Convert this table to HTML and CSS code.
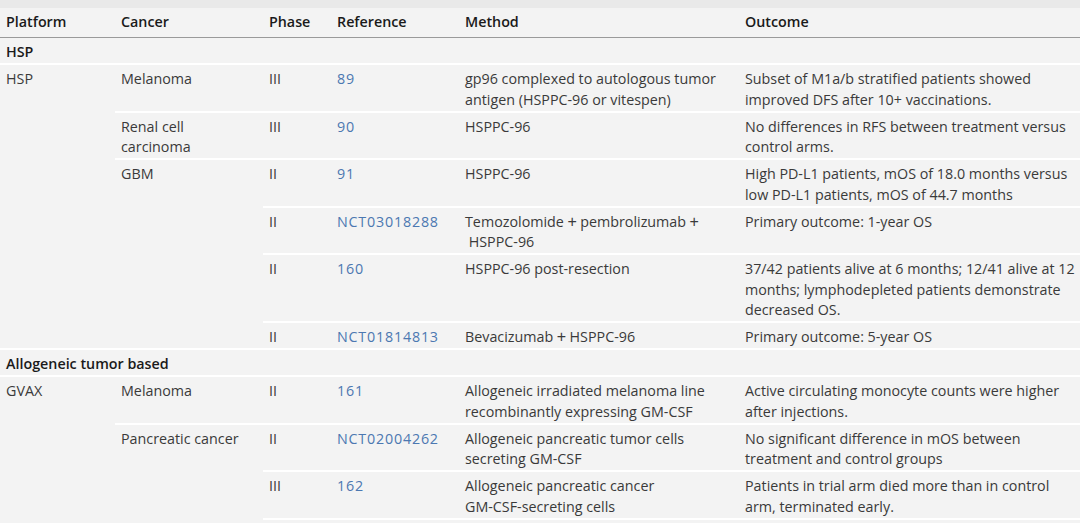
FILE: index.html
```html
<!DOCTYPE html>
<html>
<head>
<meta charset="utf-8">
<link rel="stylesheet" href="styles.css">
</head>
<body>
<div class="topbar"></div>
<table class="trials">
  <colgroup>
    <col class="c-platform"><col class="c-cancer"><col class="c-phase"><col class="c-ref"><col class="c-method"><col class="c-outcome">
  </colgroup>
  <thead>
    <tr><th>Platform</th><th>Cancer</th><th>Phase</th><th>Reference</th><th>Method</th><th>Outcome</th></tr>
  </thead>
  <tbody>
    <tr class="group"><td colspan="6">HSP</td></tr>
    <tr>
      <td rowspan="6">HSP</td>
      <td>Melanoma</td>
      <td>III</td>
      <td><a class="ref">89</a></td>
      <td>gp96 complexed to autologous tumor<br>antigen (HSPPC-96 or vitespen)</td>
      <td>Subset of M1a/b stratified patients showed<br>improved DFS after 10+ vaccinations.</td>
    </tr>
    <tr>
      <td>Renal cell<br>carcinoma</td>
      <td>III</td>
      <td><a class="ref">90</a></td>
      <td>HSPPC-96</td>
      <td>No differences in RFS between treatment versus<br>control arms.</td>
    </tr>
    <tr>
      <td rowspan="4">GBM</td>
      <td>II</td>
      <td><a class="ref">91</a></td>
      <td>HSPPC-96</td>
      <td>High PD-L1 patients, mOS of 18.0 months versus<br>low PD-L1 patients, mOS of 44.7 months</td>
    </tr>
    <tr>
      <td>II</td>
      <td><a class="ref">NCT03018288</a></td>
      <td>Temozolomide<span class="plus">+</span>pembrolizumab<span class="plus">+</span><br>&nbsp;HSPPC-96</td>
      <td>Primary outcome: 1-year OS</td>
    </tr>
    <tr>
      <td>II</td>
      <td><a class="ref">160</a></td>
      <td>HSPPC-96 post-resection</td>
      <td>37/42 patients alive at 6 months; 12/41 alive at 12<br>months; lymphodepleted patients demonstrate<br>decreased OS.</td>
    </tr>
    <tr>
      <td>II</td>
      <td><a class="ref">NCT01814813</a></td>
      <td>Bevacizumab<span class="plus">+</span>HSPPC-96</td>
      <td>Primary outcome: 5-year OS</td>
    </tr>
    <tr class="group"><td colspan="6">Allogeneic tumor based</td></tr>
    <tr>
      <td rowspan="3">GVAX</td>
      <td>Melanoma</td>
      <td>II</td>
      <td><a class="ref">161</a></td>
      <td>Allogeneic irradiated melanoma line<br>recombinantly expressing GM-CSF</td>
      <td>Active circulating monocyte counts were higher<br>after injections.</td>
    </tr>
    <tr>
      <td rowspan="2">Pancreatic cancer</td>
      <td>II</td>
      <td><a class="ref">NCT02004262</a></td>
      <td>Allogeneic pancreatic tumor cells<br>secreting GM-CSF</td>
      <td>No significant difference in mOS between<br>treatment and control groups</td>
    </tr>
    <tr class="last">
      <td>III</td>
      <td><a class="ref">162</a></td>
      <td>Allogeneic pancreatic cancer<br>GM-CSF-secreting cells</td>
      <td>Patients in trial arm died more than in control<br>arm, terminated early.</td>
    </tr>
  </tbody>
</table>
</body>
</html>
```

FILE: styles.css
```css
html, body {
  margin: 0;
  padding: 0;
  background: #f3f3f3;
}
body {
  font-family: "Open Sans", "Noto Sans", "Liberation Sans", sans-serif;
  font-size: 14.3px;
  color: #3a3a3a;
}
.topbar {
  height: 8px;
  background: #e9e9e9;
}
.trials {
  width: 1080px;
  border-collapse: collapse;
  table-layout: fixed;
}
.c-platform { width: 115px; }
.c-cancer { width: 148px; }
.c-phase { width: 68px; }
.c-ref { width: 128px; }
.c-method { width: 280px; }
.c-outcome { width: 341px; }

.trials th {
  text-align: left;
  font-weight: 600;
  color: #1a1a1a;
  line-height: 20.5px;
  padding: 4px 6px 4.5px;
  border-bottom: 1px solid #9a9a9a;
  white-space: nowrap;
}
.trials td {
  vertical-align: top;
  line-height: 20.5px;
  padding: 4px 6px 0.5px;
  border-top: 2px solid #ffffff;
  white-space: nowrap;
}
.trials tbody tr:first-child td {
  border-top: none;
}
.trials tr.last td {
  border-bottom: 2px solid #ffffff;
}
.trials tr.group td {
  font-weight: 600;
  color: #1a1a1a;
}
.ref {
  color: #4c78b1;
  text-decoration: none;
  letter-spacing: 0.8px;
}
.plus {
  font-family: "Liberation Sans", sans-serif;
  font-size: 16px;
  margin: 0 3.5px;
}
```
